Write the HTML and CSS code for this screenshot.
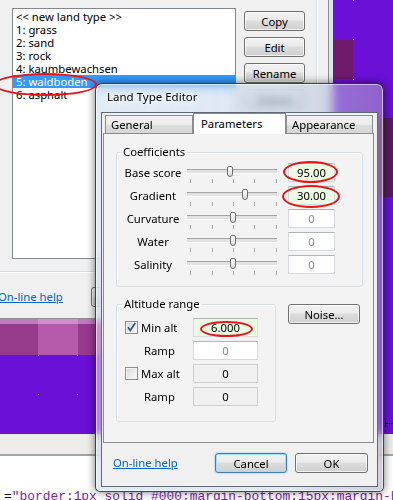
FILE: index.html
```html
<!DOCTYPE html>
<html lang="en">
<head>
    <meta charset="UTF-8">
    <title>Land Type Editor</title>
    <link rel="stylesheet" href="styles.css">
</head>
<body>
    <div class="desktop">
        <svg class="map" width="393" height="433" viewBox="0 0 393 433">
            <rect width="393" height="433" fill="#6a10d7"/>
            <rect x="314" y="40" width="39" height="39" fill="#701a6b"/>
            <rect x="353" y="118" width="40" height="79" fill="#5b1a5d"/>
            <rect x="0" y="315" width="117" height="40" fill="#963a8c"/>
            <rect x="38" y="315" width="40" height="40" fill="#b65bac"/>
            <g fill="#fff">
                <rect x="353" y="0" width="1" height="1"/>
                <rect x="353" y="39" width="1" height="1"/>
                <rect x="353" y="79" width="1" height="1"/>
                <rect x="38" y="355" width="1" height="1"/>
                <rect x="77" y="355" width="1" height="1"/>
                <rect x="38" y="394" width="1" height="1"/>
                <rect x="77" y="394" width="1" height="1"/>
            </g>
            <path d="M385.5 420v7M386 423.5h7" stroke="#111" fill="none"/>
        </svg>

        <div class="landwin">
            <div class="types-group">
                <ul class="type-list">
                    <li>&lt;&lt; new land type &gt;&gt;</li>
                    <li>1: grass</li>
                    <li>2: sand</li>
                    <li>3: rock</li>
                    <li>4: kaumbewachsen</li>
                    <li class="selected">5: waldboden</li>
                    <li>6: asphalt</li>
                </ul>
                <div class="side-buttons">
                    <button class="btn">Copy</button>
                    <button class="btn">Edit</button>
                    <button class="btn">Rename</button>
                    <button class="btn">Delete</button>
                </div>
            </div>
            <div class="landwin-footer">
                <a class="help-link" href="#">On-line help</a>
                <button class="btn close-btn">Close</button>
            </div>
        </div>

        <div class="dialog">
            <div class="dialog-title">Land Type Editor</div>
            <div class="dialog-client">
                <div class="tabs">
                    <div class="tab tab-general">General</div>
                    <div class="tab tab-params active">Parameters</div>
                    <div class="tab tab-look">Appearance</div>
                </div>
                <div class="tab-page">
                    <fieldset class="group coeffs">
                        <legend>Coefficients</legend>
                        <div class="coef-grid">
                            <span class="coef-name">Base score</span>
                            <div class="slider"><span class="thumb" style="left:40px"></span></div>
                            <div class="field set">95.00</div>

                            <span class="coef-name">Gradient</span>
                            <div class="slider"><span class="thumb" style="left:55px"></span></div>
                            <div class="field set">30.00</div>

                            <span class="coef-name">Curvature</span>
                            <div class="slider"><span class="thumb" style="left:43px"></span></div>
                            <div class="field">0</div>

                            <span class="coef-name">Water</span>
                            <div class="slider"><span class="thumb" style="left:43px"></span></div>
                            <div class="field">0</div>

                            <span class="coef-name">Salinity</span>
                            <div class="slider"><span class="thumb" style="left:43px"></span></div>
                            <div class="field">0</div>
                        </div>
                    </fieldset>

                    <div class="page-lower">
                        <fieldset class="group altitude">
                            <legend>Altitude range</legend>
                            <div class="alt-grid">
                                <label class="check-row">
                                    <span class="check">
                                        <svg width="11" height="11" viewBox="0 0 11 11"><path d="M2 5.2l2.3 3.3L9.2 1" fill="none" stroke="#3c528f" stroke-width="1.8"/></svg>
                                    </span>
                                    Min alt
                                </label>
                                <div class="field set">6.000</div>

                                <span class="ramp">Ramp</span>
                                <div class="field">0</div>

                                <label class="check-row">
                                    <span class="check"></span>
                                    Max alt
                                </label>
                                <div class="field off">0</div>

                                <span class="ramp">Ramp</span>
                                <div class="field off">0</div>
                            </div>
                        </fieldset>
                        <button class="btn noise-btn">Noise...</button>
                    </div>
                </div>
                <div class="dialog-footer">
                    <a class="help-link" href="#">On-line help</a>
                    <button class="btn focused cancel-btn">Cancel</button>
                    <button class="btn ok-btn">OK</button>
                </div>
            </div>
        </div>

        <span class="mark mark-list"></span>
        <span class="mark mark-base"></span>
        <span class="mark mark-gradient"></span>
        <span class="mark mark-minalt"></span>
    </div>
    <div class="host-bar"></div>
    <div class="code-line"><span class="code-eq">=</span>"border:1px solid #000;margin-bottom:15px;margin-bottom:15px;</div>
</body>
</html>
```

FILE: styles.css
```css
* {
    box-sizing: border-box;
}

body {
    margin: 0;
    width: 393px;
    height: 500px;
    overflow: hidden;
    background: #fff;
    font-family: "Noto Sans", "DejaVu Sans", sans-serif;
    font-size: 11.3px;
    color: #000;
}

.desktop {
    position: relative;
    height: 433px;
}

.map {
    display: block;
}

/* window behind the dialog */

.landwin {
    position: absolute;
    left: 0;
    top: 0;
    width: 333px;
    height: 324px;
    background: #f0f0f0;
    background-clip: padding-box;
    border-right: 4px solid #dbe4ef;
    border-bottom: 5px solid rgba(240, 205, 245, 0.45);
    box-shadow: inset -1px -1px #8e8e8e;
}

.types-group {
    display: flex;
    align-items: flex-start;
    width: 322px;
    height: 282px;
    margin: -10px 0 0 -5px;
    padding: 17px 0 0 16px;
    border: 1px solid #d5dfe5;
    border-radius: 3px;
    box-shadow: inset 1px 1px #fff, 1px 1px #fff;
}

.type-list {
    width: 224px;
    height: 251px;
    margin: 0;
    padding: 1px 0 0;
    list-style: none;
    background: #fff;
    border: 1px solid #828790;
}

.type-list li {
    height: 13px;
    padding-left: 3px;
    line-height: 13px;
    white-space: nowrap;
}

.type-list li.selected {
    background: #3399ff;
    color: #fff;
}

.side-buttons {
    display: flex;
    flex-direction: column;
    gap: 6px;
    margin: 3px 0 0 8px;
}

.side-buttons .btn {
    width: 61px;
}

.landwin-footer {
    display: flex;
    align-items: center;
    height: 20px;
    margin-top: 15px;
}

.landwin-footer .help-link {
    margin-left: -2px;
}

.close-btn {
    width: 75px;
    margin-left: 28px;
}

.help-link {
    color: #0066cc;
    text-decoration: underline;
    line-height: 20px;
}

.btn {
    height: 20px;
    padding: 0;
    border: 1px solid #707070;
    border-radius: 3px;
    background: linear-gradient(#f2f2f2, #ebebeb 45%, #dddddd 50%, #cfcfcf);
    box-shadow: inset 0 0 0 1px rgba(255, 255, 255, 0.7);
    font: inherit;
    color: #000;
    line-height: 17px;
}

.btn.focused {
    border-color: #3c7fb1;
    box-shadow: inset 0 0 0 1px #a6dcf8, 0 0 2px rgba(60, 160, 230, 0.6);
}

/* Land Type Editor dialog */

.dialog {
    position: absolute;
    left: 95px;
    top: 83px;
    width: 289px;
    height: 409px;
    padding: 0 5px 4px;
    border: 1px solid rgba(20, 30, 50, 0.8);
    border-radius: 7px 7px 5px 5px;
    background: linear-gradient(90deg, rgba(205, 222, 240, 0.6), rgba(195, 215, 238, 0.55) 65%, rgba(175, 165, 195, 0.55));
    backdrop-filter: blur(4px);
    box-shadow: 0 0 9px rgba(0, 0, 0, 0.55), inset 0 0 0 1px rgba(255, 255, 255, 0.55);
}

.dialog-title {
    height: 28px;
    padding-left: 6px;
    line-height: 26px;
    font-size: 11.5px;
    text-shadow: 0 0 7px #fff, 0 0 4px #fff;
}

.dialog-client {
    height: 375px;
    background: #f0f0f0;
    border: 1px solid #5f6b7a;
}

.tabs {
    display: flex;
    align-items: flex-end;
    height: 20px;
    padding-left: 3px;
}

.tab {
    height: 18px;
    padding-left: 5px;
    line-height: 17px;
    border: 1px solid #898c95;
    border-bottom: none;
    background: linear-gradient(#f3f3f3, #ebebeb 50%, #dedede 51%, #d6d6d6);
    white-space: nowrap;
}

.tab-general {
    width: 88px;
}

.tab-params {
    width: 93px;
    padding-left: 7px;
}

.tab-look {
    width: 87px;
}

.tab.active {
    position: relative;
    z-index: 1;
    height: 21px;
    margin-bottom: -1px;
    line-height: 19px;
    background: #fff;
}

.tab-page {
    height: 310px;
    margin: 0 3px 0 1px;
    padding: 10px 0 0 12px;
    border: 1px solid #898c95;
    background: #f3f3f3;
}

.group {
    margin: 0;
    padding: 0 2px;
    min-inline-size: 0;
    border: 1px solid #d5dfe5;
    border-radius: 3px;
    box-shadow: inset 1px 1px #fff;
}

.group legend {
    margin-left: 2px;
    padding: 0 2px;
    line-height: 16px;
}

.coeffs {
    width: 247px;
    padding-top: 3px;
    padding-bottom: 12px;
}

.coef-grid {
    display: grid;
    grid-template-columns: 68px 101px 47px;
    grid-auto-rows: 19px;
    row-gap: 4px;
}

.coef-name {
    line-height: 19px;
    text-align: center;
}

.slider {
    position: relative;
}

.slider::before {
    content: "";
    position: absolute;
    left: 0;
    top: 6px;
    width: 90px;
    height: 3px;
    border-top: 1px solid #a4a4a4;
    border-bottom: 1px solid #fff;
    background: #e2e2e2;
}

.slider::after {
    content: "";
    position: absolute;
    left: 3px;
    top: 16px;
    width: 87px;
    height: 4px;
    background: repeating-linear-gradient(90deg, #a9a9a9 0 1px, transparent 1px 21.5px);
}

.thumb {
    position: absolute;
    top: 3px;
    width: 6px;
    height: 11px;
    border: 1px solid #6f6f6f;
    border-radius: 2px 2px 3px 3px;
    background: linear-gradient(#ffffff, #dadada);
}

.field {
    height: 19px;
    border: 1px solid #d6dadf;
    border-top-color: #b0b5bc;
    background: #fff;
    color: #8d8d8d;
    text-align: center;
    line-height: 17px;
}

.field.set {
    background: #ebfbe3;
    color: #000;
}

.field.off {
    background: #f0f0f0;
    border-color: #cfcfcf;
    color: #000;
}

.page-lower {
    display: flex;
    align-items: flex-start;
    margin-top: 9px;
}

.altitude {
    width: 160px;
    padding-top: 6px;
    padding-bottom: 15px;
}

.altitude legend {
    margin-left: 3px;
}

.alt-grid {
    display: grid;
    grid-template-columns: 68px 65px;
    grid-auto-rows: 19px;
    row-gap: 4px;
    margin-left: 6px;
}

.check-row {
    display: flex;
    align-items: center;
    gap: 3px;
}

.check {
    display: flex;
    align-items: center;
    justify-content: center;
    width: 13px;
    height: 13px;
    border: 1px solid #8e8f8f;
    background: linear-gradient(135deg, #d9d9d9, #fafafa);
    box-shadow: inset 0 0 0 1px #f3f3f3;
}

.ramp {
    padding-left: 19px;
    line-height: 19px;
}

.noise-btn {
    width: 72px;
    margin: 8px 0 0 12px;
}

.dialog-footer {
    display: flex;
    align-items: flex-start;
    height: 43px;
    padding: 10px 9px 0 11px;
}

.cancel-btn {
    width: 72px;
    margin-left: auto;
}

.ok-btn {
    width: 73px;
    margin-left: 8px;
}

/* red annotation ellipses */

.mark {
    position: absolute;
    z-index: 5;
    border: 2px solid #e3161c;
    border-radius: 50%;
}

.mark-list {
    left: -6px;
    top: 73px;
    width: 103px;
    height: 23px;
}

.mark-base {
    left: 283px;
    top: 161px;
    width: 55px;
    height: 22px;
}

.mark-gradient {
    left: 282px;
    top: 185px;
    width: 58px;
    height: 23px;
}

.mark-minalt {
    left: 200px;
    top: 321px;
    width: 53px;
    height: 16px;
}

/* page below the screenshot */

.host-bar {
    height: 23px;
    background: #efecec;
    border-top: 1px solid #4b2a8a;
    border-bottom: 2px solid #a3a3a3;
}

.code-line {
    padding: 33px 0 0 4px;
    font-family: "Liberation Mono", monospace;
    font-size: 12.9px;
    line-height: 15px;
    color: #7b26a6;
    white-space: pre;
}

.code-eq {
    color: #000;
}
```
